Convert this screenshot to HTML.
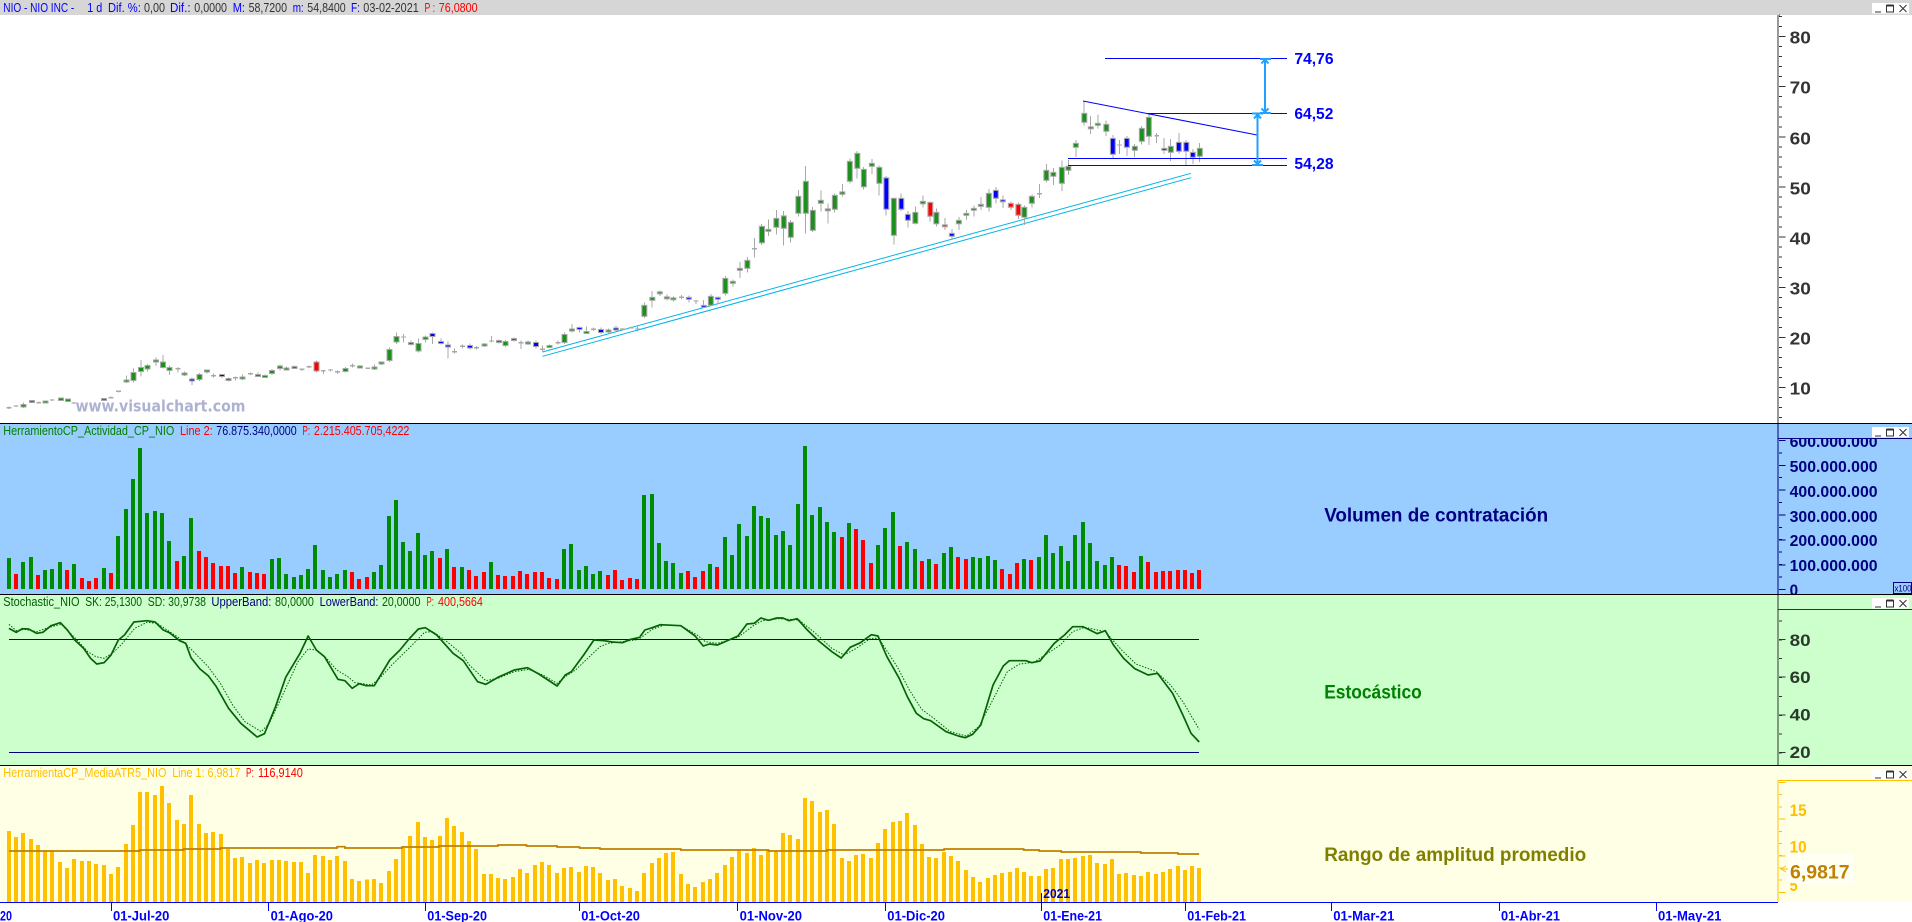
<!DOCTYPE html>
<html lang="es">
<head>
<meta charset="utf-8">
<title>NIO - NIO INC</title>
<style>
html,body{margin:0;padding:0;background:#fff;width:1912px;height:922px;overflow:hidden}
svg{display:block}
text{font-family:"Liberation Sans",Arial,sans-serif;white-space:pre}
.h{font-size:12.5px}
.b{font-weight:bold}
.ax{font-size:17.5px;font-weight:bold}
.vl{font-size:16px;font-weight:bold;fill:#000080}
.lab{font-size:16px;font-weight:bold;fill:#0000ff}
.d{font-size:14px;font-weight:bold;fill:#0000ff}
.t{font-size:19px;font-weight:bold}
.bl{fill:#0000ff}.gr{fill:#333}.rd{fill:#ff0000}.nv{fill:#000080}.dg{fill:#006000}.or{fill:#ffc000}
</style>
</head>
<body>
<svg xmlns="http://www.w3.org/2000/svg" width="1912" height="922" viewBox="0 0 1912 922">
<defs>
<filter id="o" filterUnits="userSpaceOnUse" x="0" y="0" width="1912" height="430">
<feMorphology in="SourceAlpha" operator="dilate" radius="1" result="m"/>
<feFlood flood-color="#a8a8a8"/>
<feComposite in2="m" operator="in" result="e"/>
<feMerge><feMergeNode in="e"/><feMergeNode in="SourceGraphic"/></feMerge>
</filter>
<clipPath id="cv"><rect x="1779" y="439" width="133" height="155"/></clipPath>
<g id="btn">
<rect x="1872" y="0" width="37" height="10.5" fill="#fff"/>
<path d="M1875 9H1881" stroke="#333" stroke-width="1" fill="none"/>
<path d="M1886.5 2.5H1893.5V9H1886.5Z" stroke="#333" stroke-width="1" fill="none"/>
<path d="M1886.5 2.5H1893.5" stroke="#333" stroke-width="2" fill="none"/>
<path d="M1899.5 2L1906.5 9M1906.5 2L1899.5 9" stroke="#333" stroke-width="1" fill="none"/>
</g>
</defs>

<!-- backgrounds -->
<rect x="0" y="0" width="1912" height="922" fill="#fff"/>
<rect x="0" y="0" width="1912" height="15" fill="#d6d6d6"/>
<rect x="0" y="424" width="1912" height="170" fill="#99ccff"/>
<rect x="0" y="595" width="1912" height="170" fill="#ccffcc"/>
<rect x="0" y="766" width="1912" height="136" fill="#ffffe6"/>
<rect x="0" y="423" width="1912" height="1" fill="#000"/>
<rect x="0" y="594" width="1912" height="1" fill="#000"/>
<rect x="0" y="765" width="1912" height="1" fill="#000"/>

<!-- header title bar -->
<g class="h">
<text x="3.3" y="12" class="bl" textLength="71" lengthAdjust="spacingAndGlyphs">NIO - NIO INC -</text>
<text x="87.3" y="12" class="bl" textLength="15" lengthAdjust="spacingAndGlyphs">1 d</text>
<text x="108" y="12" class="bl" textLength="32.8" lengthAdjust="spacingAndGlyphs">Dif. %:</text>
<text x="144" y="12" class="gr" textLength="21" lengthAdjust="spacingAndGlyphs">0,00</text>
<text x="170" y="12" class="bl" textLength="20.6" lengthAdjust="spacingAndGlyphs">Dif.:</text>
<text x="194.3" y="12" class="gr" textLength="32.7" lengthAdjust="spacingAndGlyphs">0,0000</text>
<text x="232.7" y="12" class="bl" textLength="12.3" lengthAdjust="spacingAndGlyphs">M:</text>
<text x="248.6" y="12" class="gr" textLength="38.4" lengthAdjust="spacingAndGlyphs">58,7200</text>
<text x="292.7" y="12" class="bl" textLength="11" lengthAdjust="spacingAndGlyphs">m:</text>
<text x="307.3" y="12" class="gr" textLength="38.4" lengthAdjust="spacingAndGlyphs">54,8400</text>
<text x="351" y="12" class="bl" textLength="9" lengthAdjust="spacingAndGlyphs">F:</text>
<text x="363.3" y="12" class="gr" textLength="55.5" lengthAdjust="spacingAndGlyphs">03-02-2021</text>
<text x="424.5" y="12" class="rd" textLength="10.5" lengthAdjust="spacingAndGlyphs">P :</text>
<text x="438.8" y="12" class="rd" textLength="38.8" lengthAdjust="spacingAndGlyphs">76,0800</text>
</g>

<!-- main axis -->
<path d="M1778 15V423" stroke="#333" stroke-width="1" fill="none" shape-rendering="crispEdges"/>
<path d="M1779 15H1780" stroke="#333" stroke-width="1" fill="none"/>
<path d="M1780.5 16V423" stroke="#333" stroke-width="3" stroke-dasharray="1 9.03" fill="none" shape-rendering="crispEdges"/>
<path d="M1782 36V423" stroke="#333" stroke-width="6.5" stroke-dasharray="1 49.15" fill="none" shape-rendering="crispEdges"/>
<g class="ax gr">
<text x="1789.6" y="43.7" textLength="21.2" lengthAdjust="spacingAndGlyphs">80</text>
<text x="1789.6" y="93.7" textLength="21.2" lengthAdjust="spacingAndGlyphs">70</text>
<text x="1789.6" y="144.5" textLength="21.2" lengthAdjust="spacingAndGlyphs">60</text>
<text x="1789.6" y="194.7" textLength="21.2" lengthAdjust="spacingAndGlyphs">50</text>
<text x="1789.6" y="244.7" textLength="21.2" lengthAdjust="spacingAndGlyphs">40</text>
<text x="1789.6" y="294.7" textLength="21.2" lengthAdjust="spacingAndGlyphs">30</text>
<text x="1789.6" y="344.7" textLength="21.2" lengthAdjust="spacingAndGlyphs">20</text>
<text x="1789.6" y="394.7" textLength="21.2" lengthAdjust="spacingAndGlyphs">10</text>
</g>

<!-- watermark -->
<text x="75.5" y="411.5" font-size="16" font-weight="bold" style="font-family:'DejaVu Sans',sans-serif" fill="#aeb2d2" textLength="170" lengthAdjust="spacingAndGlyphs">www.visualchart.com</text>

<!-- trend lines below candles -->
<path d="M542.4 352L1191 173.3M542.4 356.3L1191 177.7" stroke="#00b4e6" stroke-width="1" fill="none"/>

<!-- candle wicks zoom space 1 -->
<g transform="scale(.40816 .33333)" fill="none" stroke="#a8a8a8" stroke-width="2.45" shape-rendering="crispEdges">
<path d="M22 1219V1227M39 1215V1221M57 1207V1224M78 1201V1208M95 1205V1211M112 1203V1211M128 1197V1203M149 1194V1201M166 1198V1205M181 1206V1212M255 1194V1203M272 1190V1196M290 1171V1178M310 1127V1149M327 1106V1148M345 1080V1130M361 1092V1115M382 1073V1098M399 1065V1106M415 1097V1125M436 1101V1118M452 1114V1128M470 1132V1155M489 1119V1143M507 1108V1120M523 1120V1133M544 1122V1134M560 1133V1145M577 1129V1141M594 1124V1140M614 1117V1125M632 1117V1131M649 1124V1133M667 1107V1125M686 1093V1111M702 1100V1112M722 1097V1107M740 1105V1113M757 1096V1104M775 1081V1118M792 1110V1122M810 1107V1114M827 1112V1122M847 1101V1118M864 1090V1103M882 1095V1104M901 1102V1107M917 1094V1110M935 1086V1095M954 1043V1086M972 997V1032M989 1002V1028M1007 1022V1037M1025 1015V1058M1043 1007V1028M1060 997V1032M1080 1015V1034M1097 1024V1076M1114 1045V1061M1133 1033V1045M1151 1030V1048M1167 1038V1049M1187 1029V1041M1204 1008V1028M1222 1018V1031M1239 1020V1041M1259 1012V1025M1276 1022V1047M1293 1021V1035M1313 1021V1045M1329 1036V1056M1346 1033V1044M1367 1022V1034M1383 998V1032M1401 972V998M1420 980V998M1437 979V1002M1454 982V993M1472 982V1002M1491 985V999M1509 976V994M1525 984V992M1546 979V986M1562 980V994"/>
</g>
<!-- candle wicks zoom space 2 -->
<g transform="translate(640) scale(.40816 .33333)" fill="none" stroke="#a8a8a8" stroke-width="2.45" shape-rendering="crispEdges">
<path d="M11 907V954M30 873V923M49 871V888M66 883V902M82 889V905M102 885V899M120 886V907M137 900V912M156 900V923M174 882V920M191 889V913M209 828V886M228 838V860M245 786V834M263 771V818M281 714V773M298 672V735M315 659V708M334 630V704M352 633V737M369 660V728M388 570V650M406 498V701M423 621V696M443 571V634M460 610V671M477 580V638M496 552V590M514 475V550M532 453V536M548 501V569M568 477V522M586 497V587M603 528V647M622 592V734M640 580V633M656 633V683M675 620V674M693 586V623M711 604V665M726 625V680M747 654V690M764 687V720M781 651V690M800 630V660M818 617V650M835 591V630M855 567V635M872 561V610M889 587V624M909 604V630M927 607V657M942 617V675M960 584V623M979 552V594M996 492V547M1013 504V555M1034 481V573M1050 480V525M1068 420V471M1088 303V377M1104 348V402M1122 343V386M1142 361V408M1159 405V474M1175 420V462M1193 408V468M1212 432V471M1229 378V434M1247 342V435M1266 399V429M1284 414V462M1300 417V483M1320 399V462M1338 420V495M1355 447V492M1371 429V486"/>
</g>
<!-- doji bodies -->
<g transform="scale(.40816 .33333)" fill="none" stroke="#a8a8a8" stroke-width="12" shape-rendering="crispEdges">
<path d="M22 1221V1225M39 1216V1220M95 1206V1210M128 1198V1202M181 1207V1211M272 1191V1195M290 1172V1176M436 1104V1108M523 1125V1129M577 1131V1135M614 1119V1123M740 1106V1110M757 1098V1102M792 1110V1114M810 1108V1112M827 1113V1117M864 1095V1099M901 1103V1107M989 1009V1013M1114 1053V1057M1133 1037V1041M1167 1041V1045M1204 1021V1025M1276 1026V1030M1329 1046V1050M1367 1026V1030M1454 986V990M1525 986V990M1546 981V985M1562 985V989"/>
</g>
<g transform="translate(640) scale(.40816 .33333)" fill="none" stroke="#a8a8a8" stroke-width="12" shape-rendering="crispEdges">
<path d="M102 890V894M137 901V905M281 744V748M979 579V583M1175 433V437M1266 405V409"/>
</g>

<!-- candle bodies with outline -->
<g filter="url(#o)">
<g transform="scale(.40816 .33333)" fill="none" stroke-width="9.8" shape-rendering="crispEdges">
<path stroke="#1c901c" d="M57 1215V1219M78 1203V1206M112 1204V1208M149 1196V1200M166 1199V1203M255 1197V1200M310 1141V1145M327 1119V1140M345 1104V1113M361 1098V1105M382 1081V1084M399 1088V1101M415 1104V1110M452 1120V1124M489 1125V1137M507 1112V1115M560 1137V1140M594 1132V1135M632 1125V1128M649 1128V1131M667 1113V1119M686 1100V1104M702 1105V1108M722 1101V1104M847 1107V1113M882 1099V1102M917 1103V1106M935 1088V1091M954 1050V1080M972 1011V1024M1007 1029V1032M1025 1032V1051M1043 1013V1017M1187 1033V1036M1222 1023V1026M1239 1026V1035M1259 1017V1020M1293 1027V1030M1346 1038V1041M1383 1005V1026M1401 988V991M1437 996V999M1491 991V994"/>
<path stroke="#0000ff" d="M470 1138V1141M544 1125V1128M1060 1002V1008M1080 1026V1029M1097 1037V1040M1151 1038V1042M1313 1029V1038M1420 984V987M1472 990V996M1509 985V989"/>
<path stroke="#ff0000" d="M775 1087V1112"/>
</g>
<g transform="translate(640) scale(.40816 .33333)" fill="none" stroke-width="9.8" shape-rendering="crispEdges">
<path stroke="#1c901c" d="M11 918V947M30 894V900M49 877V880M66 892V895M82 895V898M174 890V914M209 836V879M228 845V849M245 806V809M263 782V803M298 681V727M315 690V692M334 657V680M352 649V683M369 668V711M388 591V639M406 546V639M423 633V689M443 603V609M460 628V631M477 588V627M496 577V582M514 486V543M532 462V504M548 510V559M568 491V497M586 504V549M622 597V705M675 639V669M693 606V610M726 639V670M781 662V670M800 642V645M818 626V630M835 614V618M855 582V621M942 624V651M960 591V609M996 513V540M1013 519V528M1034 504V549M1050 501V510M1068 432V441M1088 342V366M1104 382V385M1122 371V375M1142 375V393M1212 441V450M1229 386V423M1247 354V408M1300 441V456M1371 447V468"/>
<path stroke="#0000ff" d="M120 894V896M156 917V920M191 894V897M603 535V626M640 597V627M656 645V660M764 702V708M872 573V594M889 601V604M1159 417V462M1193 417V441M1284 446V450M1320 429V453M1338 429V453M1355 459V471"/>
<path stroke="#ff0000" d="M711 609V648M747 676V679M909 612V621M927 615V645"/>
</g>
</g>

<!-- Drawing lines -->
<g fill="none" stroke="#0000ff" stroke-width="1">
<path d="M1105 58.5H1287M1148 113.5H1287M1068 158.5H1287M1068 165.5H1287" shape-rendering="crispEdges"/>
<path d="M1083 101L1257 135"/>
</g>
<g fill="none" stroke="#22a0ff" stroke-width="2">
<path d="M1257.5 114V164.5M1265 59.5V112.5"/>
<path d="M1252 113.5H1263M1252 165H1263M1260 59H1271M1260 113H1271"/>
<path d="M1254 118.5L1257.5 114.5L1261 118.5M1254 160.5L1257.5 164L1261 160.5M1261.5 63.5L1265 59.5L1268.5 63.5M1261.5 108.5L1265 112L1268.5 108.5"/>
</g>
<g class="lab">
<text x="1294.4" y="64" textLength="39.2" lengthAdjust="spacingAndGlyphs">74,76</text>
<text x="1294.4" y="119" textLength="39" lengthAdjust="spacingAndGlyphs">64,52</text>
<text x="1294.4" y="169" textLength="39.2" lengthAdjust="spacingAndGlyphs">54,28</text>
</g>

<!-- Volume panel -->
<g class="h">
<text x="3.3" y="435" fill="#008000" textLength="171" lengthAdjust="spacingAndGlyphs">HerramientoCP_Actividad_CP_NIO</text>
<text x="180" y="435" class="rd" textLength="32.7" lengthAdjust="spacingAndGlyphs">Line 2:</text>
<text x="216.3" y="435" class="nv" textLength="80.4" lengthAdjust="spacingAndGlyphs">76.875.340,0000</text>
<text x="302.4" y="435" class="rd" textLength="7.8" lengthAdjust="spacingAndGlyphs">P:</text>
<text x="313.9" y="435" class="rd" textLength="95.5" lengthAdjust="spacingAndGlyphs">2.215.405.705,4222</text>
</g>
<g transform="translate(0 420) scale(.40816 .33333)" fill="none" stroke-width="9.8" shape-rendering="crispEdges">
<path stroke="#008c00" d="M22 507V414M56 507V426M76 507V411M110 507V450M127 507V447M147 507V426M181 507V432M255 507V444M289 507V348M309 507V267M326 507V177M343 507V84M360 507V279M380 507V273M397 507V279M414 507V363M451 507V408M468 507V294M593 507V441M666 507V417M684 507V414M701 507V462M720 507V471M737 507V465M755 507V447M772 507V375M791 507V450M809 507V471M826 507V462M845 507V450M916 507V456M933 507V435M953 507V288M970 507V240M987 507V366M1005 507V393M1024 507V339M1041 507V405M1058 507V393M1095 507V387M1132 507V441M1203 507V426M1382 507V387M1399 507V372M1419 507V450M1436 507V438M1453 507V462M1470 507V453"/>
<path stroke="#ff0000" d="M39 507V462M93 507V465M164 507V450M201 507V474M218 507V483M235 507V474M272 507V459M434 507V423M488 507V393M505 507V411M522 507V429M542 507V438M559 507V438M576 507V459M613 507V456M630 507V459M647 507V462M862 507V456M879 507V477M899 507V471M1078 507V414M1112 507V441M1149 507V450M1166 507V468M1186 507V456M1220 507V465M1237 507V468M1257 507V468M1274 507V453M1291 507V462M1311 507V456M1328 507V456M1345 507V474M1365 507V477M1490 507V465M1507 507V450M1524 507V480M1544 507V474M1561 507V477"/>
</g>
<g transform="translate(640 420) scale(.40816 .33333)" fill="none" stroke-width="9.8" shape-rendering="crispEdges">
<path stroke="#008c00" d="M10 507V225M29 507V222M46 507V369M64 507V423M81 507V429M100 507V459M172 507V432M208 507V351M225 507V405M243 507V312M262 507V348M279 507V258M296 507V288M314 507V294M333 507V345M350 507V333M367 507V375M387 507V252M404 507V78M421 507V285M441 507V261M458 507V306M475 507V336M512 507V309M583 507V375M600 507V324M620 507V276M654 507V366M674 507V387M708 507V417M745 507V399M762 507V381M816 507V411M833 507V414M853 507V408M870 507V420M941 507V417M978 507V411M995 507V345M1012 507V399M1032 507V378M1049 507V423M1066 507V345M1085 507V306M1103 507V369M1120 507V423M1139 507V435M1156 507V411M1228 507V408"/>
<path stroke="#ff0000" d="M118 507V453M135 507V471M154 507V453M189 507V441M495 507V351M529 507V327M546 507V360M566 507V429M637 507V378M691 507V423M725 507V432M779 507V411M799 507V417M887 507V447M907 507V462M924 507V429M958 507V420M1174 507V435M1191 507V438M1210 507V456M1245 507V426M1264 507V456M1281 507V453M1299 507V453M1318 507V450M1335 507V450M1352 507V459M1369 507V450"/>
</g>
<path d="M1778 424V594M1778 438.5H1912" stroke="#000080" stroke-width="1" fill="none" shape-rendering="crispEdges"/>
<path d="M1780.5 440V594" stroke="#000080" stroke-width="3" stroke-dasharray="1 11.4" fill="none" shape-rendering="crispEdges"/>
<path d="M1782 440V594" stroke="#000080" stroke-width="6.5" stroke-dasharray="1 23.85" fill="none" shape-rendering="crispEdges"/>
<g clip-path="url(#cv)">
<text class="vl" x="1789.6" y="447.2" textLength="88" lengthAdjust="spacingAndGlyphs">600.000.000</text>
<text class="vl" x="1789.6" y="472.2" textLength="88" lengthAdjust="spacingAndGlyphs">500.000.000</text>
<text class="vl" x="1789.6" y="497.2" textLength="88" lengthAdjust="spacingAndGlyphs">400.000.000</text>
<text class="vl" x="1789.6" y="522.2" textLength="88" lengthAdjust="spacingAndGlyphs">300.000.000</text>
<text class="vl" x="1789.6" y="546.2" textLength="88" lengthAdjust="spacingAndGlyphs">200.000.000</text>
<text class="vl" x="1789.6" y="571.2" textLength="88" lengthAdjust="spacingAndGlyphs">100.000.000</text>
<text class="vl" x="1789.6" y="595.5" textLength="8.5" lengthAdjust="spacingAndGlyphs">0</text>
</g>
<text x="1324.2" y="521.7" class="t" fill="#000080" textLength="224" lengthAdjust="spacingAndGlyphs">Volumen de contratación</text>
<rect x="1893.5" y="582.5" width="18" height="11" fill="#99ccff" stroke="#000080" stroke-width="1" shape-rendering="crispEdges"/>
<text x="1894.5" y="591.5" font-size="9.5" fill="#000080" textLength="17" lengthAdjust="spacingAndGlyphs">x100</text>

<!-- Stochastic panel -->
<g class="h">
<text x="3.3" y="606" fill="#006000" textLength="76.3" lengthAdjust="spacingAndGlyphs">Stochastic_NIO</text>
<text x="85.3" y="606" fill="#006000" textLength="56.7" lengthAdjust="spacingAndGlyphs">SK: 25,1300</text>
<text x="147.8" y="606" fill="#006000" textLength="58.2" lengthAdjust="spacingAndGlyphs">SD: 30,9738</text>
<text x="211.4" y="606" class="nv" textLength="60" lengthAdjust="spacingAndGlyphs">UpperBand:</text>
<text x="275" y="606" fill="#006000" textLength="38.9" lengthAdjust="spacingAndGlyphs">80,0000</text>
<text x="319.6" y="606" class="nv" textLength="58.8" lengthAdjust="spacingAndGlyphs">LowerBand:</text>
<text x="382" y="606" fill="#006000" textLength="38.4" lengthAdjust="spacingAndGlyphs">20,0000</text>
<text x="426.5" y="606" class="rd" textLength="7.4" lengthAdjust="spacingAndGlyphs">P:</text>
<text x="438" y="606" class="rd" textLength="44.9" lengthAdjust="spacingAndGlyphs">400,5664</text>
</g>
<path d="M9 639.5H1199M9 752.5H1199" stroke="#000080" stroke-width="1" fill="none" shape-rendering="crispEdges"/>
<g transform="translate(0 590) scale(.40816 .33333)" fill="none">
<polyline stroke="#006000" stroke-width="1" stroke-dasharray="1.5 1.5" vector-effect="non-scaling-stroke" points="22,103 40,122 60,118 90,125 120,112 150,103 185,145 215,185 235,200 255,205 280,185 300,160 330,115 360,97 385,100 440,145 470,180 510,230 540,280 570,345 600,395 640,425 660,400 700,295 730,215 755,177 775,180 800,205 825,240 850,258 870,278 910,285 930,265 960,225 1010,165 1040,127 1060,125 1090,150 1130,190 1150,225 1190,272 1220,265 1260,245 1295,238 1330,255 1365,280 1385,260 1410,240 1440,205 1470,170 1490,160 1525,155 1568,148"/>
<polyline stroke="#066206" stroke-width="1.7" vector-effect="non-scaling-stroke" stroke-linejoin="round" points="22,115 40,127 55,116 70,117 90,130 105,127 125,107 148,98 165,120 183,150 205,175 222,205 237,222 255,218 272,195 290,150 305,135 328,96 345,94 360,92 380,96 400,120 415,128 440,152 455,160 468,203 490,237 510,257 530,290 560,355 590,400 630,441 648,431 675,350 700,262 735,190 755,138 775,180 795,200 828,268 845,272 863,295 880,281 897,287 917,287 955,210 980,180 1000,150 1025,117 1042,113 1070,135 1110,190 1135,212 1170,275 1190,283 1220,262 1260,240 1292,233 1320,252 1365,288 1385,255 1400,245 1430,195 1455,150 1480,152 1500,156 1525,158 1545,148 1568,142"/>
</g>
<g transform="translate(640 590) scale(.40816 .33333)" fill="none">
<polyline stroke="#006000" stroke-width="1" stroke-dasharray="1.5 1.5" vector-effect="non-scaling-stroke" points="0,145 30,118 60,105 100,107 140,135 160,155 190,160 240,142 280,105 300,92 340,86 390,90 430,130 470,175 500,195 530,175 565,145 585,145 630,230 660,300 690,358 720,385 760,425 800,438 830,410 860,340 900,245 930,222 965,217 1030,165 1060,125 1090,112 1140,125 1180,180 1215,222 1265,245 1300,285 1330,335 1370,418"/>
<polyline stroke="#066206" stroke-width="1.7" vector-effect="non-scaling-stroke" stroke-linejoin="round" points="0,140 12,120 30,113 50,104 100,107 135,138 155,168 170,162 190,165 240,138 262,102 280,100 296,84 315,91 335,84 350,84 365,92 385,86 410,120 435,150 470,185 493,204 515,172 540,158 567,134 583,138 605,200 635,265 655,320 677,370 695,386 712,392 750,425 780,438 797,443 815,433 835,405 865,285 890,228 905,212 945,212 960,218 980,213 1015,160 1040,135 1060,110 1085,110 1120,131 1140,122 1160,165 1185,205 1212,236 1245,255 1268,250 1305,310 1330,375 1350,430 1370,456"/>
</g>
<path d="M1778 595V765M1778 609.5H1912" stroke="#333" stroke-width="1" fill="none" shape-rendering="crispEdges"/>
<path d="M1780.5 620.5V765" stroke="#333" stroke-width="3" stroke-dasharray="1 17.85" fill="none" shape-rendering="crispEdges"/>
<path d="M1782 639V765" stroke="#333" stroke-width="6.5" stroke-dasharray="1 36.7" fill="none" shape-rendering="crispEdges"/>
<g class="ax" fill="#2a3a2a" style="font-size:17px">
<text x="1789.6" y="646" textLength="21" lengthAdjust="spacingAndGlyphs">80</text>
<text x="1789.6" y="683" textLength="21" lengthAdjust="spacingAndGlyphs">60</text>
<text x="1789.6" y="720.6" textLength="21" lengthAdjust="spacingAndGlyphs">40</text>
<text x="1789.6" y="758" textLength="21" lengthAdjust="spacingAndGlyphs">20</text>
</g>
<text x="1324.2" y="698.5" class="t" fill="#008000" textLength="97.6" lengthAdjust="spacingAndGlyphs">Estocástico</text>

<!-- ATR panel -->
<g class="h">
<text x="3.3" y="777" class="or" textLength="163.2" lengthAdjust="spacingAndGlyphs">HerramientaCP_MediaATR5_NIO</text>
<text x="172.2" y="777" class="or" textLength="68.2" lengthAdjust="spacingAndGlyphs">Line 1: 6,9817</text>
<text x="246" y="777" class="rd" textLength="7.9" lengthAdjust="spacingAndGlyphs">P:</text>
<text x="258" y="777" class="rd" textLength="44.9" lengthAdjust="spacingAndGlyphs">116,9140</text>
</g>
<g transform="translate(0 762) scale(.40816 .33333)" fill="none" stroke="#ffc000" stroke-width="9.8" shape-rendering="crispEdges">
<path d="M22 420V207M39 420V225M56 420V213M76 420V231M93 420V249M110 420V267M127 420V267M147 420V300M164 420V318M181 420V291M201 420V297M218 420V297M235 420V306M255 420V309M272 420V336M289 420V315M309 420V246M326 420V189M343 420V90M360 420V90M380 420V99M397 420V72M414 420V123M434 420V174M451 420V186M468 420V99M488 420V186M505 420V213M522 420V210M542 420V216M559 420V261M576 420V288M593 420V285M613 420V303M630 420V294M647 420V303M666 420V294M684 420V294M701 420V297M720 420V300M737 420V300M755 420V333M772 420V279M791 420V282M809 420V294M826 420V282M845 420V297M862 420V351M879 420V357M899 420V353M916 420V351M933 420V363M953 420V327M970 420V291M987 420V258M1005 420V222M1024 420V180M1041 420V225M1058 420V234M1078 420V222M1095 420V168M1112 420V192M1132 420V210M1149 420V237M1166 420V261M1186 420V336M1203 420V336M1220 420V348M1237 420V351M1257 420V345M1274 420V321M1291 420V333M1311 420V309M1328 420V300M1345 420V309M1365 420V333M1382 420V318M1399 420V315M1419 420V330M1436 420V312M1453 420V315M1470 420V333M1490 420V354M1507 420V351M1524 420V372M1544 420V378M1561 420V387"/>
</g>
<g transform="translate(640 762) scale(.40816 .33333)" fill="none" stroke="#ffc000" stroke-width="9.8" shape-rendering="crispEdges">
<path d="M10 420V333M29 420V303M46 420V288M64 420V273M81 420V270M100 420V336M118 420V366M135 420V375M154 420V360M172 420V351M189 420V333M208 420V309M225 420V285M243 420V264M262 420V273M279 420V258M296 420V279M314 420V264M333 420V267M350 420V213M367 420V219M387 420V231M404 420V108M421 420V117M441 420V150M458 420V144M475 420V186M495 420V288M512 420V297M529 420V279M546 420V276M566 420V288M583 420V243M600 420V201M620 420V180M637 420V177M654 420V153M674 420V189M691 420V246M708 420V285M725 420V288M745 420V270M762 420V282M779 420V297M799 420V324M816 420V345M833 420V360M853 420V348M870 420V339M887 420V333M907 420V330M924 420V318M941 420V330M958 420V342M978 420V342M995 420V321M1012 420V318M1032 420V291M1049 420V291M1066 420V288M1085 420V282M1103 420V279M1120 420V303M1139 420V306M1156 420V291M1174 420V336M1191 420V333M1210 420V339M1228 420V342M1245 420V330M1264 420V336M1281 420V330M1299 420V321M1318 420V312M1335 420V324M1352 420V312M1369 420V318"/>
</g>
<g fill="none" stroke="#bf8000" stroke-width="1.7">
<path transform="translate(0 762) scale(.40816 .33333)" vector-effect="non-scaling-stroke" d="M22 267H342V264H450V261H540V258H826V254H845V258H985V255H1075V252H1220V249H1290V252H1365V255H1420V258H1470V261H1568"/>
<path transform="translate(640 762) scale(.40816 .33333)" vector-effect="non-scaling-stroke" d="M0 261H100V264H315V267H458V264H745V261H940V264H978V267H1032V270H1227V273H1318V276H1370"/>
</g>
<path d="M1778 780V902M1778 780.5H1912" stroke="#ffc000" stroke-width="1" fill="none" shape-rendering="crispEdges"/>
<path d="M1780.5 782V902" stroke="#ffc000" stroke-width="3" stroke-dasharray="1 11.2" fill="none" shape-rendering="crispEdges"/>
<path d="M1782 782V902" stroke="#ffc000" stroke-width="6.5" stroke-dasharray="1 35.7" fill="none" shape-rendering="crispEdges"/>
<text x="1789.6" y="816" class="ax or" style="font-size:17px" textLength="17" lengthAdjust="spacingAndGlyphs">15</text>
<text x="1789.6" y="852.5" class="ax or" style="font-size:17px" textLength="17" lengthAdjust="spacingAndGlyphs">10</text>
<text x="1789.6" y="891" class="ax or" style="font-size:17px" textLength="8" lengthAdjust="spacingAndGlyphs">5</text>
<rect x="1788" y="854" width="65.5" height="29" fill="#fffff4"/>
<path d="M1786 866L1781 869L1786 872M1781 869H1788" stroke="#ffc000" stroke-width="1" fill="none"/>
<text x="1790" y="878.5" font-size="19" font-weight="bold" fill="#c08000" textLength="59.6" lengthAdjust="spacingAndGlyphs">6,9817</text>
<text x="1324.2" y="861" class="t" fill="#808000" textLength="262" lengthAdjust="spacingAndGlyphs">Rango de amplitud promedio</text>

<!-- Date axis -->
<path d="M0 902.5H1778" stroke="#0000ff" stroke-width="1" fill="none" shape-rendering="crispEdges"/>
<path d="M111.5 902V911M268.5 902V911M425.5 902V911M579.5 902V911M737.5 902V911M885.5 902V911M1041.5 893V911M1185.5 902V911M1331.5 902V911M1499.5 902V911M1656.5 902V911" stroke="#0000ff" stroke-width="1" fill="none" shape-rendering="crispEdges"/>
<g class="d">
<text x="0" y="920.5" textLength="12" lengthAdjust="spacingAndGlyphs">20</text>
<text x="113" y="920.5" textLength="56.4" lengthAdjust="spacingAndGlyphs">01-Jul-20</text>
<text x="270.6" y="920.5" textLength="62.4" lengthAdjust="spacingAndGlyphs">01-Ago-20</text>
<text x="427.3" y="920.5" textLength="59.7" lengthAdjust="spacingAndGlyphs">01-Sep-20</text>
<text x="581.2" y="920.5" textLength="58.8" lengthAdjust="spacingAndGlyphs">01-Oct-20</text>
<text x="739.6" y="920.5" textLength="62.4" lengthAdjust="spacingAndGlyphs">01-Nov-20</text>
<text x="887.3" y="920.5" textLength="57.7" lengthAdjust="spacingAndGlyphs">01-Dic-20</text>
<text x="1043.3" y="920.5" textLength="58.7" lengthAdjust="spacingAndGlyphs">01-Ene-21</text>
<text x="1187.3" y="920.5" textLength="58.7" lengthAdjust="spacingAndGlyphs">01-Feb-21</text>
<text x="1333.2" y="920.5" textLength="61.2" lengthAdjust="spacingAndGlyphs">01-Mar-21</text>
<text x="1501" y="920.5" textLength="59" lengthAdjust="spacingAndGlyphs">01-Abr-21</text>
<text x="1658" y="920.5" textLength="63.4" lengthAdjust="spacingAndGlyphs">01-May-21</text>
</g>
<text x="1043.3" y="898" font-size="13" font-weight="bold" fill="#0000c8" textLength="26.7" lengthAdjust="spacingAndGlyphs">2021</text>

<!-- window buttons -->
<use href="#btn" x="0" y="3"/>
<use href="#btn" x="0" y="427"/>
<use href="#btn" x="0" y="598"/>
<use href="#btn" x="0" y="769"/>
</svg>
</body>
</html>
